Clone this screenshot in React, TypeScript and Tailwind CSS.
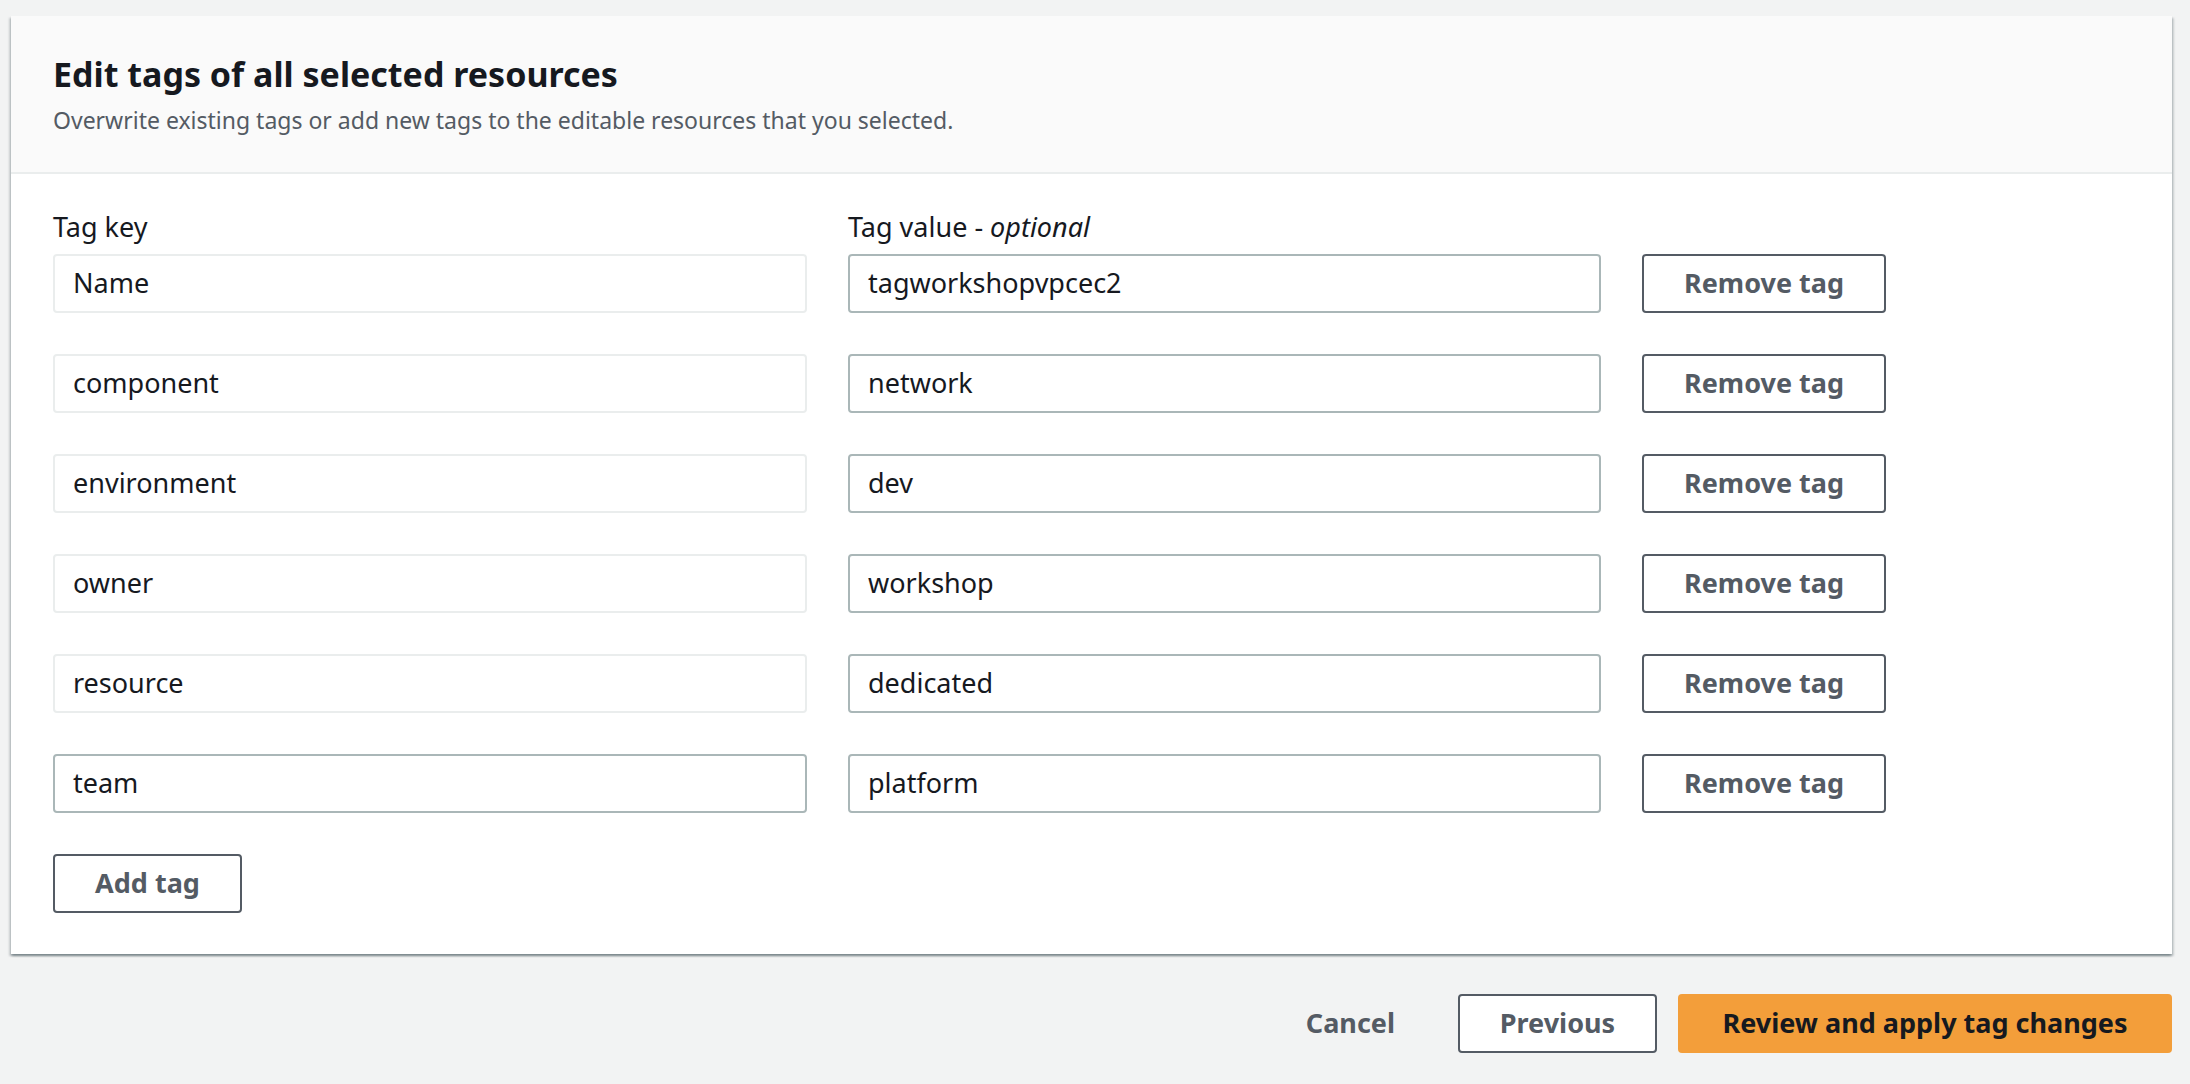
import React from "react";

const rows: [string, string][] = [
  ["Name", "tagworkshopvpcec2"],
  ["component", "network"],
  ["environment", "dev"],
  ["owner", "workshop"],
  ["resource", "dedicated"],
  ["team", "platform"],
];

const font = { fontFamily: '"Noto Sans", "Open Sans", sans-serif' };

export default function App() {
  return (
    <div
      className="w-[2190px] h-[1084px] bg-[#f2f3f3] pt-[16px] overflow-hidden"
      style={font}
    >
      <div className="ml-[11px] mr-[18px] bg-white shadow-[0_2px_2px_0_rgba(0,28,36,0.3),2px_2px_2px_0_rgba(0,28,36,0.15),-2px_2px_2px_0_rgba(0,28,36,0.15)]">
        <div className="bg-[#fafafa] border-b-2 border-[#eaeded] pl-[42px] pt-[36px] pb-[36px]">
          <h2 className="text-[34px] leading-[44px] font-bold text-[#16191f]">
            Edit tags of all selected resources
          </h2>
          <p className="mt-[8px] text-[23px] leading-[32px] text-[#545b64]">
            Overwrite existing tags or add new tags to the editable resources that you selected.
          </p>
        </div>
        <div className="pl-[42px] pt-[33px] pb-[41px]">
          <div className="flex gap-x-[41px] text-[27px] leading-[40px] text-[#16191f]">
            <div className="w-[754px]">Tag key</div>
            <div className="w-[753px]">
              Tag value - <span className="italic">optional</span>
            </div>
          </div>
          <div className="mt-[7px] flex flex-col gap-y-[41px]">
            {rows.map(([k, v], i) => (
              <div key={k} className="flex gap-x-[41px]">
                <div
                  className={
                    "w-[754px] h-[59px] flex items-center rounded-[4px] border-2 bg-white px-[18px] text-[27px] text-[#16191f] " +
                    (i === rows.length - 1 ? "border-[#aab7b8]" : "border-[#eaeded]")
                  }
                >
                  {k}
                </div>
                <div className="w-[753px] h-[59px] flex items-center rounded-[4px] border-2 border-[#aab7b8] bg-white px-[18px] text-[27px] text-[#16191f]">
                  {v}
                </div>
                <button className="w-[244px] h-[59px] rounded-[4px] border-2 border-[#545b64] bg-white text-[27px] font-bold text-[#545b64] flex items-center justify-center">
                  Remove tag
                </button>
              </div>
            ))}
            <div>
              <button className="w-[189px] h-[59px] rounded-[4px] border-2 border-[#545b64] bg-white text-[27px] font-bold text-[#545b64] flex items-center justify-center">
                Add tag
              </button>
            </div>
          </div>
        </div>
      </div>
      <div className="mt-[40px] mr-[18px] flex justify-end items-center gap-x-[21px]">
        <button className="h-[59px] px-[42px] text-[27px] font-bold text-[#545b64] flex items-center">
          Cancel
        </button>
        <button className="w-[199px] h-[59px] rounded-[4px] border-2 border-[#545b64] bg-white text-[27px] font-bold text-[#545b64] flex items-center justify-center">
          Previous
        </button>
        <button className="w-[494px] h-[59px] rounded-[4px] bg-[#f39e3a] text-[27px] font-bold text-[#16191f] flex items-center justify-center">
          Review and apply tag changes
        </button>
      </div>
    </div>
  );
}
